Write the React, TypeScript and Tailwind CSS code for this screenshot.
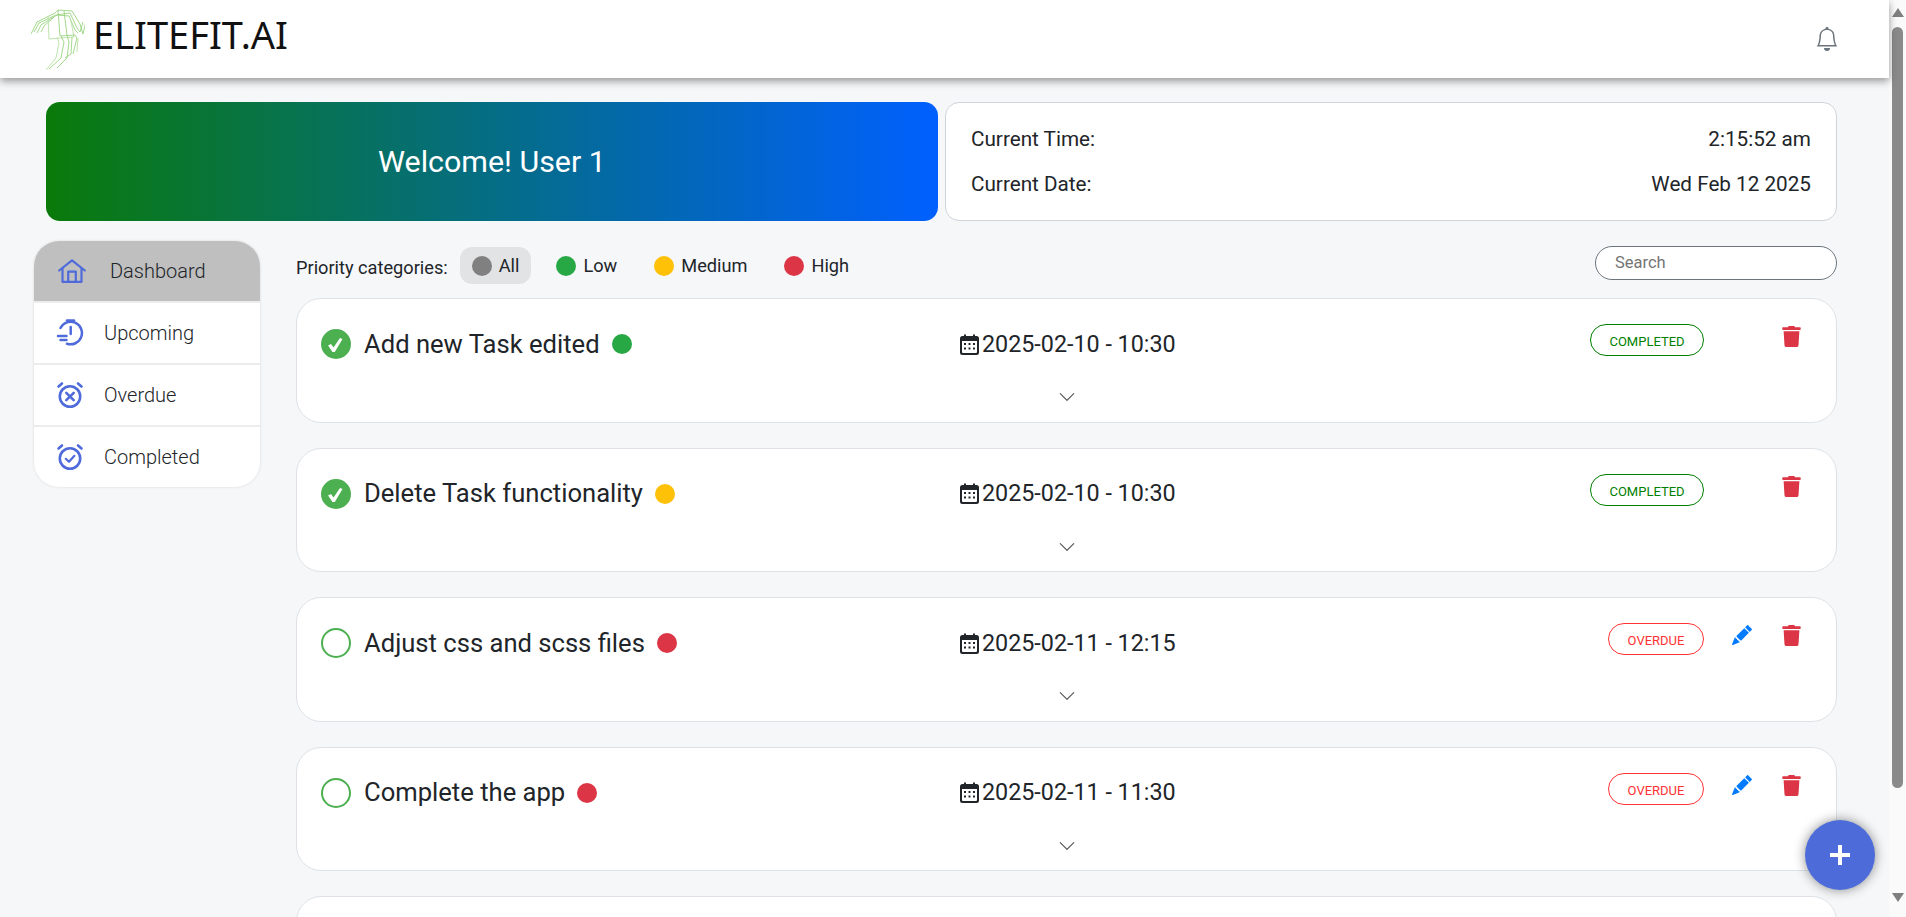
import React from "react";
import { FaTrash } from "react-icons/fa";
import { BsBell, BsChevronDown, BsPencilFill } from "react-icons/bs";

function Logo() {
  return (
    <svg width="54" height="62" viewBox="0 0 54 62" fill="none" stroke="#9ad47f" strokeWidth="0.9" className="shrink-0">
      <path d="M0 26 L6 14 L24 5 L27 2 L41 3 L49 16 L52 26 L55 13" />
      <path d="M3 24 L8 15 L25 7 L39 5 L46 20 L49 24 L52 14" />
      <path d="M6 25 L10 17 L26 7 L38 8 L44 22 L47 25" />
      <path d="M10 24 L13 18 L23 9" />
      <path d="M17 8 L18 31 L43 29 L40 13" stroke="#b8e0a5" />
      <path d="M27 2 L29 28 L44 27 L46 30 L42 46" />
      <path d="M33 3 L36 27 L38 34 L36 50 L26 60" />
      <path d="M30 28 L33 34 L30 50 L18 61" />
      <path d="M26 29 L28 35 L25 50 L15 62" stroke="#b8e0a5" />
      <path d="M41 29 L40 46 L34 50" />
      <path d="M47 30 L46 44" stroke="#b8e0a5" />
    </svg>
  );
}

function AlarmIcon({ kind }: { kind: "x" | "check" }) {
  return (
    <svg width="28" height="28" viewBox="0 0 28 28" fill="none" stroke="#4f6bdb" strokeWidth="2.6" strokeLinecap="round" strokeLinejoin="round" className="shrink-0">
      <circle cx="14" cy="15.5" r="10.2" />
      <path d="M2.5 5.5 L6 2.5" />
      <path d="M25.5 5.5 L22 2.5" />
      {kind === "x" ? <path d="M10.3 11.8 L17.7 19.2 M17.7 11.8 L10.3 19.2" /> : <path d="M9.8 15.8 L13 18.8 L18.4 12.8" strokeWidth="2.2" />}
    </svg>
  );
}

function TimerIcon() {
  return (
    <svg width="28" height="28" viewBox="0 0 28 28" fill="none" stroke="#4f6bdb" strokeWidth="2.5" strokeLinecap="round" strokeLinejoin="round" className="shrink-0">
      <path d="M11 1.5 H18" />
      <path d="M4.5 9 A11.3 11.3 0 1 1 11 24.7" />
      <path d="M14.7 8 V15" />
      <path d="M2 17 H10.5" />
      <path d="M4.5 21 H10.5" />
    </svg>
  );
}

function HomeIcon() {
  return (
    <svg width="28" height="24" viewBox="0 0 28 24" fill="none" stroke="#4f6bdb" strokeWidth="2.2" strokeLinejoin="round" strokeLinecap="round" className="shrink-0">
      <path d="M1.2 11.5 L14 1.4 L26.8 11.5" />
      <path d="M4.5 9.5 V22.8 H23.5 V9.5" />
      <path d="M10.2 22.8 V12.6 H17.8 V22.8" />
    </svg>
  );
}

function CalendarIcon() {
  return (
    <svg width="19" height="21" viewBox="0 0 19 21" className="shrink-0">
      <path d="M4 0.5 H6 V2 H13 V0.5 H15 V2 H16.5 A2.5 2.5 0 0 1 19 4.5 V18.5 A2.5 2.5 0 0 1 16.5 21 H2.5 A2.5 2.5 0 0 1 0 18.5 V4.5 A2.5 2.5 0 0 1 2.5 2 H4 Z M2 7 V18 A1 1 0 0 0 3 19 H16 A1 1 0 0 0 17 18 V7 Z" fill="#212529" fillRule="evenodd" />
      <path d="M4 9 H6 V11 H4 Z M8.5 9 H10.5 V11 H8.5 Z M13 9 H15 V11 H13 Z M4 13.5 H6 V15.5 H4 Z M8.5 13.5 H10.5 V15.5 H8.5 Z M13 13.5 H15 V15.5 H13 Z" fill="#212529" />
    </svg>
  );
}

function SideItem({ icon, label, active, last }: { icon: React.ReactNode; label: string; active?: boolean; last?: boolean }) {
  return (
    <div className={`flex items-center ${active ? "h-[60px] bg-[#bfbfbf] pl-[24px] gap-[24px]" : "h-[60px] pl-[22px] gap-[20px]"} ${last ? "" : "border-b-2 border-[#ececec] box-content"}`}>
      {icon}
      <span className="text-[20px] font-light text-[#212529]">{label}</span>
    </div>
  );
}

function Chip({ color, label, active }: { color: string; label: string; active?: boolean }) {
  return (
    <div className={`flex h-[37px] items-center gap-[7px] rounded-[12px] px-[12px] ${active ? "bg-[#e2e3e5]" : ""}`}>
      <span className={`h-[20px] w-[20px] rounded-full ${color}`} />
      <span className="text-[18.2px] text-[#212529]">{label}</span>
    </div>
  );
}

type Task = { title: string; dot: string; date: string; status: "COMPLETED" | "OVERDUE" };

const tasks: Task[] = [
  { title: "Add new Task edited", dot: "bg-[#28a745]", date: "2025-02-10 - 10:30", status: "COMPLETED" },
  { title: "Delete Task functionality", dot: "bg-[#ffc107]", date: "2025-02-10 - 10:30", status: "COMPLETED" },
  { title: "Adjust css and scss files", dot: "bg-[#dc3545]", date: "2025-02-11 - 12:15", status: "OVERDUE" },
  { title: "Complete the app", dot: "bg-[#dc3545]", date: "2025-02-11 - 11:30", status: "OVERDUE" },
];

function TaskCard({ task }: { task: Task }) {
  const done = task.status === "COMPLETED";
  return (
    <div className="h-[124.5px] shrink-0 rounded-[25px] border border-[#dee2e6] bg-white pt-[25px]">
      <div className="flex h-[40px] items-start pl-[24px] pr-[34px]">
        <div className="mt-[2px] flex h-[36px] w-[639px] shrink-0 items-center">
          {done ? (
            <svg width="30" height="30" viewBox="0 0 30 30" className="shrink-0">
              <circle cx="15" cy="15" r="15" fill="#4caf50" />
              <path d="M7 16.5 L10 15 L12.5 18.5 L19 9 L21.5 10 L13.8 23 L11.5 23 Z" fill="#fff" strokeLinejoin="round" />
            </svg>
          ) : (
            <span className="box-border h-[30px] w-[30px] shrink-0 rounded-full border-2 border-[#4caf50]" />
          )}
          <span className="ml-[13px] text-[25.6px] text-[#212529]">{task.title}</span>
          <span className={`ml-[12px] h-[20px] w-[20px] rounded-full ${task.dot}`} />
        </div>
        <div className="mt-[2px] flex h-[36px] items-center">
          <CalendarIcon />
          <span className="ml-[3px] text-[23.3px] text-[#212529]">{task.date}</span>
        </div>
        <div className={`ml-auto flex h-[32px] items-center justify-center rounded-full border pt-[4px] text-[13px] ${done ? "w-[114px] border-[#008000] text-[#008000]" : "w-[96px] border-[#ff3333] text-[#ff3333]"}`}>
          {task.status}
        </div>
        <div className="ml-[28px] mt-[2px] h-[21px] w-[20px]">
          {!done && <BsPencilFill size={20} color="#007bff" />}
        </div>
        <FaTrash size={21} color="#dc3545" className="ml-[29px] mt-[2px]" />
      </div>
      <div className="mt-[24px] flex justify-center">
        <BsChevronDown size={18} color="#555" />
      </div>
    </div>
  );
}

export default function App() {
  return (
    <div className="flex h-screen w-full overflow-hidden bg-[#f6f7f9] font-['Roboto',sans-serif]">
      <div className="relative flex min-w-0 flex-1 flex-col">
        <header className="flex h-[78px] shrink-0 items-center bg-white pl-[31px] pr-[50px] shadow-[0_3px_8px_rgba(0,0,0,0.4)]">
          <Logo />
          <span className="mb-[10px] ml-[8px] font-['Noto_Sans',sans-serif] text-[38px] leading-none text-[#111]">ELITEFIT.AI</span>
          <BsBell size={24} color="#6c757d" className="ml-auto" />
        </header>

        <div className="ml-[46px] mr-[52px] mt-[24px] grid h-[119px] shrink-0 grid-cols-2 gap-[7px]">
          <div className="flex items-center justify-center rounded-[14px] bg-[linear-gradient(to_right,#0a7a0a,#0060ff)] text-[30.4px] text-white">
            Welcome! User 1
          </div>
          <div className="flex flex-col justify-center gap-[14px] rounded-[14px] border border-[#ced4da] bg-white px-[25px] text-[20.7px] leading-[31px] text-[#212529]">
            <div className="flex justify-between"><span>Current Time:</span><span>2:15:52 am</span></div>
            <div className="flex justify-between"><span>Current Date:</span><span>Wed Feb 12 2025</span></div>
          </div>
        </div>

        <div className="ml-[34px] mr-[52px] mt-[20px] flex min-h-0 flex-1 gap-[36px]">
          <aside className="h-[246px] w-[226px] shrink-0 overflow-hidden rounded-[25px] bg-white shadow-[0_0_3px_rgba(0,0,0,0.12)]">
            <SideItem active icon={<HomeIcon />} label="Dashboard" />
            <SideItem icon={<TimerIcon />} label="Upcoming" />
            <SideItem icon={<AlarmIcon kind="x" />} label="Overdue" />
            <SideItem last icon={<AlarmIcon kind="check" />} label="Completed" />
          </aside>

          <main className="flex min-w-0 flex-1 flex-col">
            <div className="flex h-[57px] shrink-0 items-start pt-[6px]">
              <span className="mr-[12px] mt-[7px] text-[18.2px] text-[#212529]">Priority categories:</span>
              <div className="flex gap-[13px]">
                <Chip active color="bg-[#808080]" label="All" />
                <Chip color="bg-[#28a745]" label="Low" />
                <Chip color="bg-[#ffc107]" label="Medium" />
                <Chip color="bg-[#dc3545]" label="High" />
              </div>
              <div className="ml-auto mt-[-1px] flex h-[34px] w-[242px] items-center rounded-full border border-[#6c757d] bg-white pl-[19px] text-[16.5px] text-[#757575]">
                Search
              </div>
            </div>
            <div className="flex flex-col gap-[25px]">
              {tasks.map((t) => <TaskCard key={t.title} task={t} />)}
              <div className="h-[124.5px] shrink-0 rounded-[25px] border border-[#dee2e6] bg-white" />
            </div>
          </main>
        </div>

        <button className="absolute bottom-[27px] right-[14px] flex h-[70px] w-[70px] items-center justify-center rounded-full bg-[#4d6cd9] shadow-[0_0_12px_rgba(0,0,0,0.45)]">
          <svg width="20" height="20" viewBox="0 0 20 20" fill="#fff"><path d="M8 0 H12 V8 H20 V12 H12 V20 H8 V12 H0 V8 H8 Z" /></svg>
        </button>
      </div>

      <div className="flex w-[17px] shrink-0 flex-col items-center bg-[#fafafa]">
        <svg width="12" height="27" viewBox="0 0 12 27" fill="#7f7f7f" className="shrink-0"><path d="M0 17 L6 8 L12 17 Z" /></svg>
        <div className="h-[761px] w-[11px] shrink-0 rounded-full bg-[#8a8a8a]" />
        <svg width="12" height="27" viewBox="0 0 12 27" fill="#7f7f7f" className="mt-auto shrink-0"><path d="M0 3 L12 3 L6 12 Z" /></svg>
      </div>
    </div>
  );
}
